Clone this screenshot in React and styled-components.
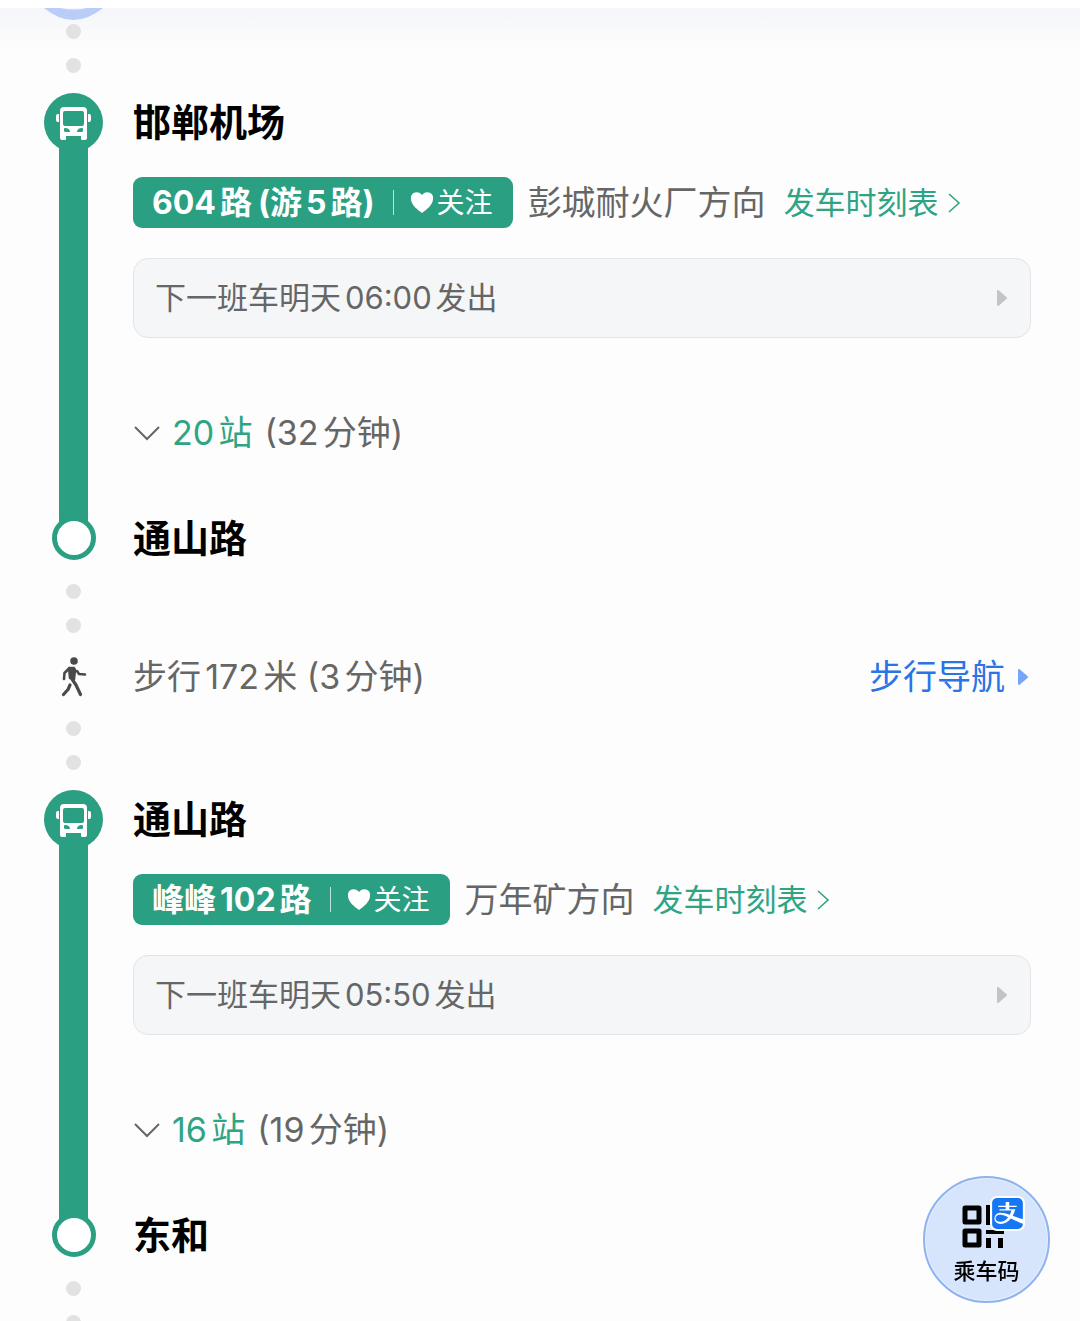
import React from "react";
import styled, { createGlobalStyle } from "styled-components";
import { SiAlipay } from "react-icons/si";

const green = "#2b9f82";
const greenText = "#2fa484";
const grey = "#666666";

const GlobalStyle = createGlobalStyle`
  *, *::before, *::after { box-sizing: border-box; }
  body {
    margin: 0;
    background: #fdfdfd;
    color: #000;
    font-family: Inter, "Noto Sans CJK SC", sans-serif;
    text-autospace: normal;
  }
  button {
    margin: 0;
    padding: 0;
    border: 0;
    background: none;
    color: inherit;
    font: inherit;
    text-align: left;
    cursor: pointer;
  }
  a { color: inherit; text-decoration: none; }
  svg { display: block; flex: none; }
`;

const Page = styled.div`
  min-height: 100vh;
  overflow: hidden;
`;

const TopEdge = styled.header`
  height: 8px;
  background: #fff;
`;

const Route = styled.main`
  padding: 0 49px 0 44px;
  background: linear-gradient(#f5f6fa, #fdfdfd 44px);
`;

const Row = styled.div`
  display: grid;
  grid-template-columns: 59px minmax(0, 1fr);
  column-gap: 30px;
  align-items: ${(p) => (p.$middle ? "center" : "stretch")};
  min-height: ${(p) => p.$minHeight || 0}px;
`;

const Rail = styled.div`
  display: flex;
  flex-direction: column;
  align-items: center;
`;

const Dots = styled.div`
  width: 59px;
  display: flex;
  flex-direction: column;
  align-items: center;
  gap: 19px;
  padding: ${(p) => p.$before || 0}px 0 ${(p) => p.$after || 0}px;
`;

const Dot = styled.span`
  flex: none;
  width: 15px;
  height: 15px;
  border-radius: 50%;
  background: #e2e2e2;
`;

const Trail = styled.div`
  height: 64px;
  overflow: hidden;
`;

const BusStop = styled.div`
  z-index: 1;
  display: grid;
  place-items: center;
  width: 59px;
  height: 59px;
  border-radius: 50%;
  background: ${green};
`;

const Line = styled.div`
  flex: 1;
  width: 29px;
  margin: -8px 0;
  background: ${green};
`;

const EndStop = styled.div`
  z-index: 1;
  width: 44px;
  height: 44px;
  border: 5px solid ${green};
  border-radius: 50%;
  background: #fff;
`;

const Content = styled.div`
  display: flex;
  flex-direction: column;
  align-items: flex-start;
`;

const StopName = styled.h2`
  margin: 0;
  font-size: 38px;
  font-weight: 700;
  line-height: ${(p) => (p.$end ? 44 : 58)}px;
`;

const LineRow = styled.div`
  display: flex;
  align-items: center;
  margin: 26px 0 30px;
  white-space: nowrap;
`;

const LineBadge = styled.div`
  display: flex;
  align-items: center;
  height: 51px;
  padding: 0 20px 0 19px;
  border-radius: 9px;
  background: ${green};
  color: #fff;
`;

const LineName = styled.span`
  font-size: 32px;
  font-weight: 700;
  line-height: 50px;
`;

const LineAlias = styled.span`
  margin-left: 6px;
`;

const Follow = styled.button`
  display: flex;
  align-items: center;
  gap: 3px;
  font-size: 28px;
  line-height: 50px;

  &::before {
    content: "";
    width: 1px;
    height: 25px;
    margin: 0 13px 0 18px;
    background: rgba(255, 255, 255, 0.7);
  }
`;

const Direction = styled.span`
  margin-left: 15px;
  color: ${grey};
  font-size: 34px;
  line-height: 50px;
`;

const Timetable = styled.a`
  display: flex;
  align-items: center;
  gap: 8px;
  margin-left: 18px;
  color: ${greenText};
  font-size: 31px;
  line-height: 50px;
`;

const Departure = styled.button`
  display: flex;
  align-items: center;
  justify-content: space-between;
  width: 100%;
  height: 80px;
  padding: 0 23px 0 21px;
  border: 1px solid #e2e4e7;
  border-radius: 15px;
  background: #f4f6f8;
  color: ${grey};
  font-size: 31px;
  line-height: 50px;
`;

const Stops = styled.button`
  display: flex;
  align-items: center;
  margin: 70px 0 58px;
  color: ${grey};
  font-size: 34px;
  line-height: 50px;
`;

const StopCount = styled.span`
  margin: 0 12px 0 11px;
  color: ${greenText};
`;

const WalkRow = styled.div`
  display: flex;
  align-items: center;
  justify-content: space-between;
  color: ${grey};
  font-size: 34px;
  line-height: 50px;
`;

const WalkLink = styled.a`
  display: flex;
  align-items: center;
  gap: 13px;
  padding-right: 3px;
  color: #2a74e8;
`;

const RideCode = styled.button`
  position: fixed;
  right: 30px;
  bottom: 18px;
  display: flex;
  flex-direction: column;
  align-items: center;
  gap: 7px;
  width: 127px;
  height: 127px;
  padding-top: 18px;
  border: 2px solid #8fb3ef;
  border-radius: 50%;
  background: #d7e5fc;
  box-shadow: inset 0 0 0 1px #e6effe;
  font-size: 22px;
  font-weight: 500;
  line-height: 32px;
`;

const CodeArt = styled.span`
  display: flex;
  align-items: flex-end;
  padding-left: 14px;
`;

const PayBadge = styled.span`
  display: grid;
  place-items: center;
  width: 35px;
  height: 35px;
  margin: 0 0 17px -15px;
  border-radius: 7px;
  background: #fff;
  color: #1677f5;
`;

function BusIcon() {
  return (
    <svg width="37" height="34" viewBox="0 0 37 34" fill="#fff" aria-hidden="true">
      <path
        fillRule="evenodd"
        d="M9 1h19a4 4 0 0 1 4 4v27a2 2 0 0 1-2 2h-3a1 1 0 0 1-1-1v-3H11v3a1 1 0 0 1-1 1H7a2 2 0 0 1-2-2V5a4 4 0 0 1 4-4zM10 5a2 2 0 0 0-2 2v11a2 2 0 0 0 2 2h17a2 2 0 0 0 2-2V7a2 2 0 0 0-2-2zM9 23v1.500q0 1.500 1.500 1.500H15c0-2.500-2-4-5-4q-1 0-1 1zM28 23v1.500q0 1.500-1.500 1.500H22c0-2.500 2-4 5-4q1 0 1 1z"
      />
      <path d="M4 8v8H3a2 2 0 0 1-2-2v-4a2 2 0 0 1 2-2zM33 8h1a2 2 0 0 1 2 2v4a2 2 0 0 1-2 2h-1z" />
    </svg>
  );
}

function WalkIcon() {
  return (
    <svg width="26" height="40" viewBox="0 0 26 40" fill="none" stroke="#4a4a4a" strokeLinecap="round" strokeLinejoin="round" aria-hidden="true">
      <circle cx="13" cy="4" r="3.800" fill="#4a4a4a" stroke="none" />
      <path d="M8 11h5l1 2-1 9-4-1z" fill="#4a4a4a" strokeWidth="2.500" />
      <path d="M7.500 12l-4 4-.5 6M16 14l2 3 6 .5" strokeWidth="2.600" />
      <path d="M11 22l4 6 4.500 9.500M9 28l-2 4.500-4.500 5" strokeWidth="3.200" />
    </svg>
  );
}

function HeartIcon() {
  return (
    <svg width="24" height="22" viewBox="0 0 24 22" fill="#fff" aria-hidden="true">
      <path d="M12 21C8 18 1 13 1 7a6 6 0 0 1 11-4 6 6 0 0 1 11 4c0 6-7 11-11 14z" />
    </svg>
  );
}

function Chevron({ down }) {
  return down ? (
    <svg width="28" height="18" viewBox="0 0 28 18" fill="none" stroke="#666" strokeWidth="2" aria-hidden="true">
      <path d="M2 3l12 12L26 3" />
    </svg>
  ) : (
    <svg width="14" height="20" viewBox="0 0 14 20" fill="none" stroke={greenText} strokeWidth="1.600" aria-hidden="true">
      <path d="M2 1l10 9-10 9" />
    </svg>
  );
}

function Triangle({ color }) {
  return (
    <svg width="10" height="18" viewBox="0 0 10 18" fill={color} stroke={color} strokeWidth="2" strokeLinejoin="round" aria-hidden="true">
      <path d="M1 2v14l8-7z" />
    </svg>
  );
}

function CodeIcon() {
  return (
    <svg width="43" height="43" viewBox="0 0 43 43" fill="none" stroke="#000" strokeWidth="5" strokeLinejoin="round" aria-hidden="true">
      <rect x="3" y="3" width="14" height="14" />
      <rect x="3" y="26" width="14" height="14" />
      <path d="M26.500 0v20M26.500 33v10M38.500 33v10" />
      <path d="M24 27h18" strokeWidth="4" />
    </svg>
  );
}

function StartRing() {
  return (
    <svg width="59" height="12" viewBox="0 0 59 12" aria-hidden="true">
      <path d="M0 0q29 24 59 0h-16q-13 3-27 0z" fill="#bacdf8" />
    </svg>
  );
}

function DotPair(props) {
  return (
    <Dots {...props}>
      <Dot />
      <Dot />
    </Dots>
  );
}

function Ride({ from, to, line, alias, direction, departure, stops, minutes }) {
  return (
    <Row as="section">
      <Rail>
        <BusStop>
          <BusIcon />
        </BusStop>
        <Line />
        <EndStop />
      </Rail>
      <Content>
        <StopName>{from}</StopName>
        <LineRow>
          <LineBadge>
            <LineName>
              {line}
              {alias && <LineAlias>({alias})</LineAlias>}
            </LineName>
            <Follow type="button">
              <HeartIcon />
              关注
            </Follow>
          </LineBadge>
          <Direction>{direction}</Direction>
          <Timetable href="#timetable">
            发车时刻表
            <Chevron />
          </Timetable>
        </LineRow>
        <Departure type="button">
          <span>下一班车明天{departure}发出</span>
          <Triangle color="#c3c4c6" />
        </Departure>
        <Stops type="button" aria-expanded="false">
          <Chevron down />
          <StopCount>{stops}站</StopCount>
          <span>({minutes}分钟)</span>
        </Stops>
        <StopName $end>{to}</StopName>
      </Content>
    </Row>
  );
}

export default function App() {
  return (
    <Page lang="zh-CN">
      <GlobalStyle />
      <TopEdge />
      <Route>
        <StartRing />
        <DotPair $before={4} $after={20} />
        <Ride
          from="邯郸机场"
          to="通山路"
          line="604路"
          alias="游5路"
          direction="彭城耐火厂方向"
          departure="06:00"
          stops={20}
          minutes={32}
        />
        <DotPair $before={24} />
        <Row $middle $minHeight={88}>
          <Rail>
            <WalkIcon />
          </Rail>
          <WalkRow>
            <span>步行172米 (3分钟)</span>
            <WalkLink href="#walk">
              步行导航
              <Triangle color="#76a6fa" />
            </WalkLink>
          </WalkRow>
        </Row>
        <DotPair $after={20} />
        <Ride
          from="通山路"
          to="东和"
          line="峰峰102路"
          direction="万年矿方向"
          departure="05:50"
          stops={16}
          minutes={19}
        />
        <Trail>
          <DotPair $before={24} />
        </Trail>
      </Route>
      <RideCode type="button">
        <CodeArt>
          <CodeIcon />
          <PayBadge>
            <SiAlipay size={31} />
          </PayBadge>
        </CodeArt>
        乘车码
      </RideCode>
    </Page>
  );
}
